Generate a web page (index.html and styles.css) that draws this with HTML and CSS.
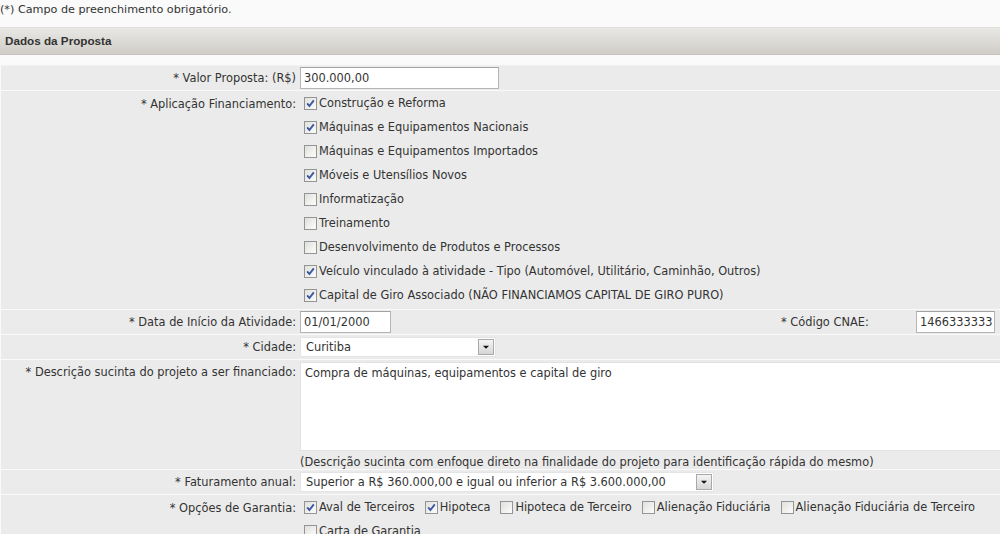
FILE: index.html
```html
<!DOCTYPE html>
<html lang="pt-BR">
<head>
<meta charset="utf-8">
<title>Dados da Proposta</title>
<link rel="stylesheet" href="styles.css">
</head>
<body>
<div class="note">(*) Campo de preenchimento obrigatório.</div>
<div class="section-head">Dados da Proposta</div>
<div class="form">
  <div class="row">
    <div class="lbl">* Valor Proposta: (R$)</div>
    <div class="val"><div class="input w-valor">300.000,00</div></div>
  </div>
  <div class="row row-apl">
    <div class="lbl lbl-top">* Aplicação Financiamento:</div>
    <div class="val opts">
      <div class="opt"><span class="cb on"><svg viewBox="0 0 11 11"><path d="M2.2 5.4 L4.4 8 L8.8 2.4"/></svg></span>Construção e Reforma</div>
      <div class="opt"><span class="cb on"><svg viewBox="0 0 11 11"><path d="M2.2 5.4 L4.4 8 L8.8 2.4"/></svg></span>Máquinas e Equipamentos Nacionais</div>
      <div class="opt"><span class="cb"></span>Máquinas e Equipamentos Importados</div>
      <div class="opt"><span class="cb on"><svg viewBox="0 0 11 11"><path d="M2.2 5.4 L4.4 8 L8.8 2.4"/></svg></span>Móveis e Utensílios Novos</div>
      <div class="opt"><span class="cb"></span>Informatização</div>
      <div class="opt"><span class="cb"></span>Treinamento</div>
      <div class="opt"><span class="cb"></span>Desenvolvimento de Produtos e Processos</div>
      <div class="opt"><span class="cb on"><svg viewBox="0 0 11 11"><path d="M2.2 5.4 L4.4 8 L8.8 2.4"/></svg></span>Veículo vinculado à atividade - Tipo (Automóvel, Utilitário, Caminhão, Outros)</div>
      <div class="opt"><span class="cb on"><svg viewBox="0 0 11 11"><path d="M2.2 5.4 L4.4 8 L8.8 2.4"/></svg></span>Capital de Giro Associado (NÃO FINANCIAMOS CAPITAL DE GIRO PURO)</div>
    </div>
  </div>
  <div class="row">
    <div class="lbl">* Data de Início da Atividade:</div>
    <div class="val grow"><div class="input w-data">01/01/2000</div></div>
    <div class="lbl2">* Código CNAE:</div>
    <div class="val"><div class="input w-cnae">1466333333</div></div>
  </div>
  <div class="row">
    <div class="lbl">* Cidade:</div>
    <div class="val"><div class="select w-cidade"><span class="sel-text">Curitiba</span><span class="arrow"><svg viewBox="0 0 16 15"><path d="M4.5 6 L11.5 6 L8 9.5 Z"/></svg></span></div></div>
  </div>
  <div class="row">
    <div class="lbl lbl-desc">* Descrição sucinta do projeto a ser financiado:</div>
    <div class="val desc">
      <div class="textarea">Compra de máquinas, equipamentos e capital de giro</div>
      <div class="hint">(Descrição sucinta com enfoque direto na finalidade do projeto para identificação rápida do mesmo)</div>
    </div>
  </div>
  <div class="row">
    <div class="lbl">* Faturamento anual:</div>
    <div class="val"><div class="select w-fat"><span class="sel-text">Superior a R$ 360.000,00 e igual ou inferior a R$ 3.600.000,00</span><span class="arrow"><svg viewBox="0 0 16 15"><path d="M4.5 6 L11.5 6 L8 9.5 Z"/></svg></span></div></div>
  </div>
  <div class="row">
    <div class="lbl lbl-top">* Opções de Garantia:</div>
    <div class="val opts">
      <div class="opt-line">
        <span class="opt-i"><span class="cb on"><svg viewBox="0 0 11 11"><path d="M2.2 5.4 L4.4 8 L8.8 2.4"/></svg></span>Aval de Terceiros</span>
        <span class="opt-i"><span class="cb on"><svg viewBox="0 0 11 11"><path d="M2.2 5.4 L4.4 8 L8.8 2.4"/></svg></span>Hipoteca</span>
        <span class="opt-i"><span class="cb"></span>Hipoteca de Terceiro</span>
        <span class="opt-i"><span class="cb"></span>Alienação Fiduciária</span>
        <span class="opt-i"><span class="cb"></span>Alienação Fiduciária de Terceiro</span>
      </div>
      <div class="opt-line">
        <span class="opt-i"><span class="cb"></span>Carta de Garantia</span>
      </div>
    </div>
  </div>
</div>
</body>
</html>
```
FILE: styles.css
```css
html, body {
  margin: 0;
  padding: 0;
  background: #fafafa;
  overflow: hidden;
}
body {
  width: 1000px;
  height: 534px;
  font-family: "DejaVu Sans", Verdana, sans-serif;
  font-size: 11.4px;
  color: #333;
}
.note {
  font-size: 11.2px;
  height: 20px;
  line-height: 20px;
  padding-left: 0;
  color: #333;
}
.section-head {
  margin-top: 7px;
  height: 26px;
  line-height: 26px;
  border-top: 1px solid #e0dfdc;
  border-bottom: 1px solid #c4c2bd;
  background: linear-gradient(#e9e8e5, #d0cdc7);
  font-family: "Liberation Sans", Arial, sans-serif;
  font-weight: bold;
  font-size: 11.7px;
  color: #333;
  padding-left: 5px;
}
.form {
  margin-top: 10px;
  margin-left: 1px;
  display: flex;
  flex-direction: column;
  gap: 1px;
  border-top: 1px solid #f0f0f0;
}
.row {
  display: flex;
  background: #ebebeb;
  min-height: 23px;
  overflow: hidden;
}
.row-apl { padding-bottom: 2px; }
.lbl {
  width: 295px;
  flex: none;
  text-align: right;
  padding-right: 4px;
  display: flex;
  align-items: center;
  justify-content: flex-end;
  white-space: nowrap;
}
.lbl-top {
  align-items: flex-start;
  padding-top: 6px;
  height: 14px;
}
.lbl-desc {
  align-items: flex-start;
  padding-top: 5px;
}
.lbl2 {
  width: 135px;
  flex: none;
  display: flex;
  align-items: center;
  white-space: nowrap;
}
.val {
  display: flex;
  align-items: center;
  padding: 1px 0;
}
.grow { flex: 1; }
.input {
  box-sizing: border-box;
  height: 22px;
  line-height: 20px;
  border: 1px solid #b5b5b5;
  border-top-color: #a3a3a3;
  background: #fff;
  padding-left: 3px;
  white-space: nowrap;
  overflow: hidden;
}
.w-valor { width: 199px; }
.w-data { width: 91px; }
.w-cnae { width: 79px; margin-right: 5px; }
.select {
  box-sizing: border-box;
  height: 20px;
  display: flex;
  align-items: center;
  background: #fff;
  border: 1px solid #e4e4e4;
  padding-left: 5px;
  margin: 1px 0;
}
.sel-text {
  flex: 1;
  white-space: nowrap;
  overflow: hidden;
}
.arrow {
  width: 16px;
  height: 16px;
  flex: none;
  margin-right: 1px;
  box-sizing: border-box;
  border: 1px solid #a9a9a9;
  background: linear-gradient(#f4f4f4, #d6d6d6);
  display: flex;
}
.arrow svg { width: 14px; height: 14px; }
.arrow path { fill: #111; }
.w-cidade { width: 196px; }
.w-fat { width: 414px; }
.opts {
  flex-direction: column;
  align-items: flex-start;
  padding: 0;
}
.opt, .opt-line {
  height: 24px;
  display: flex;
  align-items: center;
  white-space: nowrap;
}
.opt-i {
  display: inline-flex;
  align-items: center;
  margin-right: 6px;
}
.cb {
  box-sizing: border-box;
  width: 13px;
  height: 13px;
  flex: none;
  margin-left: 4px;
  margin-right: 2px;
  border: 1px solid #939494;
  background: linear-gradient(135deg, #e0e0dc, #fcfcfc);
  display: inline-flex;
}
.cb svg { width: 11px; height: 11px; }
.cb path {
  fill: none;
  stroke: #3a57a6;
  stroke-width: 1.9;
}
.desc {
  flex-direction: column;
  align-items: flex-start;
  padding: 2px 0 0;
}
.textarea {
  box-sizing: border-box;
  width: 720px;
  height: 89px;
  background: #fff;
  border: 1px solid #e2e2e2;
  padding: 3px 4px;
  line-height: 14px;
}
.hint {
  line-height: 14px;
  padding-top: 4px;
  white-space: nowrap;
}
```
